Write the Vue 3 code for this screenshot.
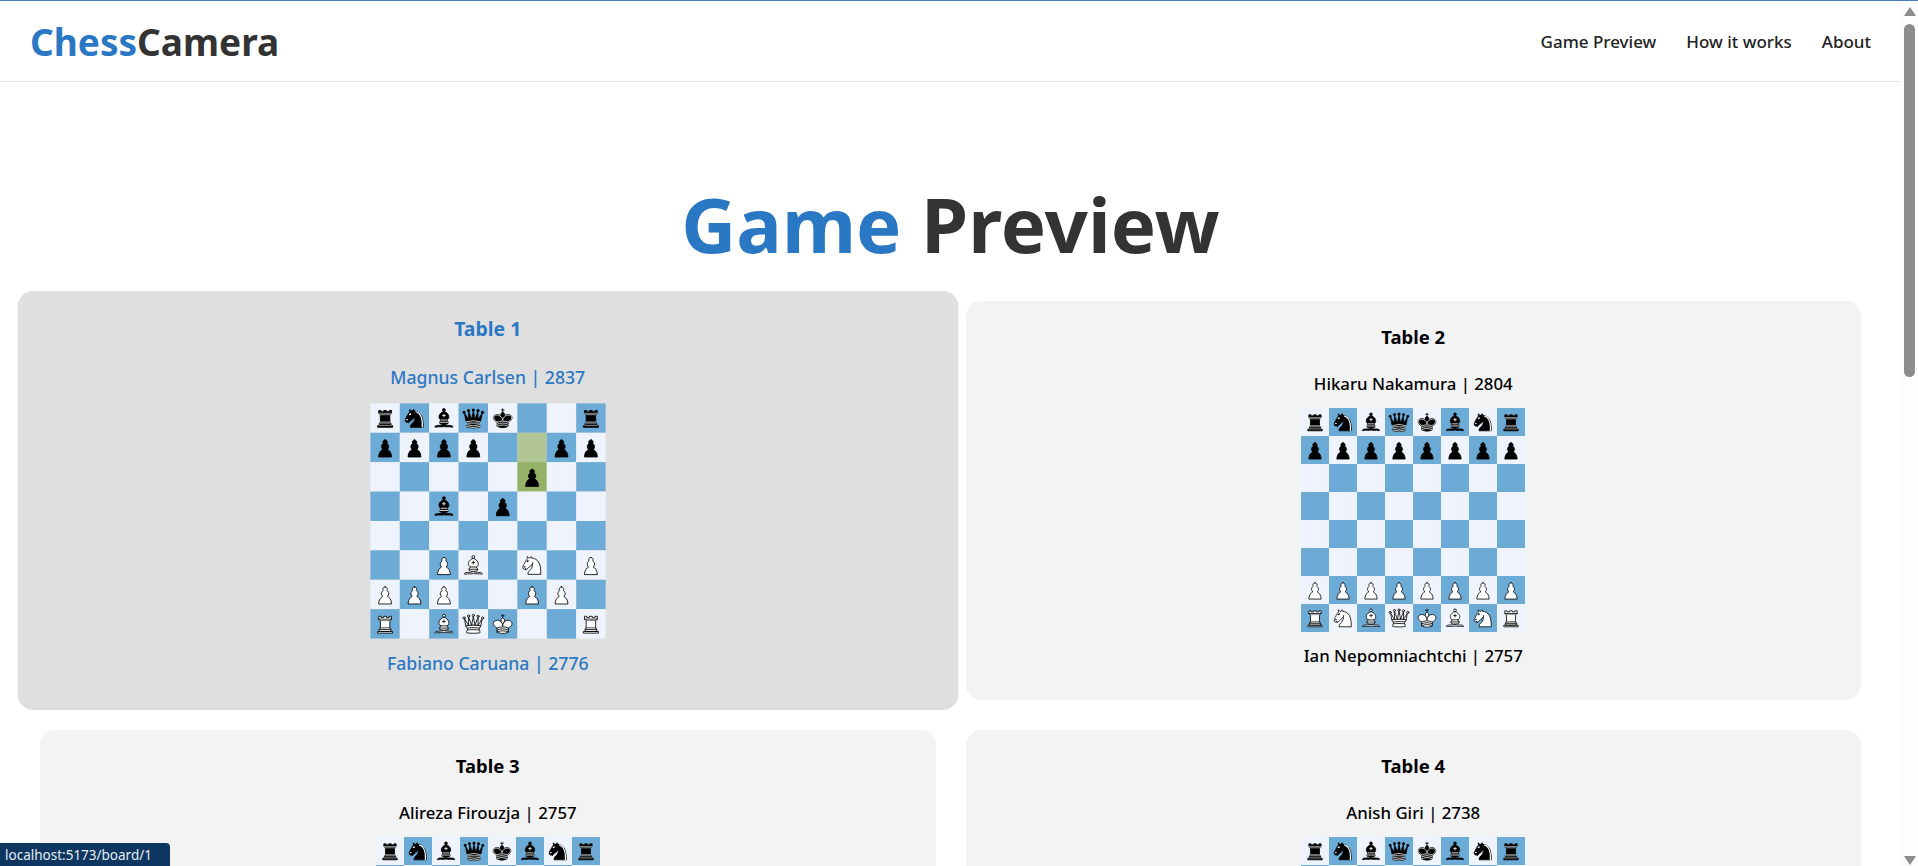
<script setup>
const startFen = 'rnbqkbnr/pppppppp/8/8/8/8/PPPPPPPP/RNBQKBNR'

const tables = [
  { id: 1, white: 'Fabiano Caruana | 2776', black: 'Magnus Carlsen | 2837', fen: 'rnbqk2r/pppp2pp/5p2/2b1p3/8/2PB1N1P/PPP2PP1/R1BQK2R', lastMove: [13, 21], active: true },
  { id: 2, white: 'Ian Nepomniachtchi | 2757', black: 'Hikaru Nakamura | 2804', fen: startFen },
  { id: 3, black: 'Alireza Firouzja | 2757', fen: startFen },
  { id: 4, black: 'Anish Giri | 2738', fen: startFen }
]

const parseFen = (fen) => {
  const squares = []
  for (const ch of fen.replaceAll('/', '')) {
    if (ch >= '1' && ch <= '8') {
      for (let i = 0; i < Number(ch); i++) squares.push(null)
    } else {
      squares.push(ch)
    }
  }
  return squares
}

const pieceId = (ch) => (ch === ch.toUpperCase() ? 'w' : 'b') + ch.toUpperCase()

const squareClass = (index, table) => {
  const row = Math.floor(index / 8)
  const dark = (row + index) % 2 === 1
  const moved = table.lastMove && table.lastMove.includes(index)
  return [dark ? 'dark' : 'light', moved ? 'moved' : '']
}
</script>

<template>
  <div class="page">
    <svg class="defs" width="0" height="0" aria-hidden="true">
      <symbol id="wP" viewBox="0 0 45 45">
        <path d="m22.5 9c-2.21 0-4 1.79-4 4 0 .89.29 1.71.78 2.38C17.33 16.5 16 18.59 16 21c0 2.03.94 3.84 2.41 5.03C15.41 27.09 11 31.58 11 39.5h23c0-7.92-4.41-12.41-7.41-13.47C28.06 24.84 29 23.03 29 21c0-2.41-1.33-4.5-3.28-5.62.49-.67.78-1.49.78-2.38 0-2.21-1.79-4-4-4z" fill="#fff" stroke="#000" stroke-width="1.5" stroke-linecap="round" />
      </symbol>
      <symbol id="bP" viewBox="0 0 45 45">
        <path d="m22.5 9c-2.21 0-4 1.79-4 4 0 .89.29 1.71.78 2.38C17.33 16.5 16 18.59 16 21c0 2.03.94 3.84 2.41 5.03C15.41 27.09 11 31.58 11 39.5h23c0-7.92-4.41-12.41-7.41-13.47C28.06 24.84 29 23.03 29 21c0-2.41-1.33-4.5-3.28-5.62.49-.67.78-1.49.78-2.38 0-2.21-1.79-4-4-4z" fill="#000" stroke="#000" stroke-width="1.5" stroke-linecap="round" />
      </symbol>
      <symbol id="wR" viewBox="0 0 45 45">
        <g fill="#fff" fill-rule="evenodd" stroke="#000" stroke-width="1.5" stroke-linecap="round" stroke-linejoin="round">
          <path d="M9 39h27v-3H9v3zM12 36v-4h21v4H12zM11 14V9h4v2h5V9h5v2h5V9h4v5" stroke-linecap="butt" />
          <path d="M34 14l-3 3H14l-3-3" />
          <path d="M31 17v12.5H14V17" stroke-linecap="butt" stroke-linejoin="miter" />
          <path d="M31 29.5l1.5 2.5h-20l1.5-2.5" />
          <path d="M11 14h23" fill="none" stroke-linejoin="miter" />
        </g>
      </symbol>
      <symbol id="bR" viewBox="0 0 45 45">
        <g fill="#000" fill-rule="evenodd" stroke="#000" stroke-width="1.5" stroke-linecap="round" stroke-linejoin="round">
          <path d="M9 39h27v-3H9v3zM12.5 32l1.5-2.5h17l1.5 2.5h-20zM12 36v-4h21v4H12z" stroke-linecap="butt" />
          <path d="M14 29.5v-13h17v13H14z" stroke-linecap="butt" stroke-linejoin="miter" />
          <path d="M14 16.5L11 14h23l-3 2.5H14zM11 14V9h4v2h5V9h5v2h5V9h4v5H11z" stroke-linecap="butt" />
          <path d="M12 35.5h21M13 31.5h19M14 29.5h17M14 16.5h17M11 14h23" fill="none" stroke="#fff" stroke-width="1" stroke-linejoin="miter" />
        </g>
      </symbol>
      <symbol id="wN" viewBox="0 0 45 45">
        <g fill="none" fill-rule="evenodd" stroke="#000" stroke-width="1.5" stroke-linecap="round" stroke-linejoin="round">
          <path d="M22 10c10.5 1 16.5 8 16 29H15c0-9 10-6.500 8-21" fill="#fff" />
          <path d="M24 18c.38 2.910-5.550 7.370-8 9-3 2-2.820 4.340-5 4-1.042-.940 1.410-3.040 0-3-1 0 .190 1.230-1 2-1 0-4.003 1-4-4 0-2 6-12 6-12s1.890-1.900 2-3.500c-.730-.994-.500-2-.500-3 1-1 3 2.500 3 2.500h2s.780-1.992 2.500-3c1 0 1 3 1 3" fill="#fff" />
          <path d="M9.500 25.500a.5.5 0 1 1-1 0 .5.5 0 1 1 1 0z" fill="#000" />
          <path d="M15 15.500a.5 1.500 0 1 1-1 0 .5 1.500 0 1 1 1 0z" fill="#000" transform="matrix(.866 .5 -.5 .866 9.693 -5.173)" />
        </g>
      </symbol>
      <symbol id="bN" viewBox="0 0 45 45">
        <g fill="none" fill-rule="evenodd" stroke="#000" stroke-width="1.5" stroke-linecap="round" stroke-linejoin="round">
          <path d="M22 10c10.500 1 16.500 8 16 29H15c0-9 10-6.500 8-21" fill="#000" />
          <path d="M24 18c.38 2.910-5.550 7.370-8 9-3 2-2.820 4.340-5 4-1.042-.940 1.410-3.040 0-3-1 0 .190 1.230-1 2-1 0-4.003 1-4-4 0-2 6-12 6-12s1.890-1.900 2-3.500c-.730-.994-.500-2-.500-3 1-1 3 2.500 3 2.500h2s.780-1.992 2.500-3c1 0 1 3 1 3" fill="#000" />
          <path d="M9.500 25.500a.5.5 0 1 1-1 0 .5.5 0 1 1 1 0z" fill="#fff" stroke="#fff" />
          <path d="M15 15.500a.5 1.500 0 1 1-1 0 .5 1.500 0 1 1 1 0z" fill="#fff" stroke="#fff" transform="matrix(.866 .5 -.5 .866 9.693 -5.173)" />
          <path d="M24.550 10.400l-.450 1.450.500.150c3.150 1 5.650 2.490 7.900 6.750S35.750 29.060 35.250 39l-.050.500h2.250l.050-.500c.500-10.060-.880-16.850-3.250-21.340-2.370-4.490-5.790-6.640-9.190-7.160l-.510-.100z" fill="#fff" stroke="none" />
        </g>
      </symbol>
      <symbol id="wB" viewBox="0 0 45 45">
        <g fill="none" fill-rule="evenodd" stroke="#000" stroke-width="1.5" stroke-linecap="round" stroke-linejoin="round">
          <g fill="#fff" stroke-linecap="butt">
            <path d="M9 36c3.390-.970 10.110.430 13.500-2 3.390 2.430 10.110 1.030 13.500 2 0 0 1.650.540 3 2-.680.970-1.650.990-3 .500-3.390-.970-10.110.460-13.500-1-3.390 1.460-10.110.030-13.500 1-1.354.490-2.323.470-3-.500 1.354-1.940 3-2 3-2z" />
            <path d="M15 32c2.500 2.500 12.500 2.500 15 0 .500-1.500 0-2 0-2 0-2.500-2.500-4-2.500-4 5.500-1.500 6-11.500-5-15.500-11 4-10.500 14-5 15.500 0 0-2.500 1.500-2.500 4 0 0-.500.500 0 2z" />
            <path d="M25 8a2.500 2.500 0 1 1-5 0 2.500 2.500 0 1 1 5 0z" />
          </g>
          <path d="M17.500 26h10M15 30h15m-7.500-14.500v5M20 18h5" stroke-linejoin="miter" />
        </g>
      </symbol>
      <symbol id="bB" viewBox="0 0 45 45">
        <g fill="none" fill-rule="evenodd" stroke="#000" stroke-width="1.5" stroke-linecap="round" stroke-linejoin="round">
          <g fill="#000" stroke-linecap="butt">
            <path d="M9 36c3.390-.970 10.110.430 13.500-2 3.390 2.430 10.110 1.030 13.500 2 0 0 1.650.540 3 2-.680.970-1.650.990-3 .500-3.390-.970-10.110.460-13.500-1-3.390 1.460-10.110.030-13.500 1-1.354.490-2.323.470-3-.500 1.354-1.940 3-2 3-2z" />
            <path d="M15 32c2.500 2.500 12.500 2.500 15 0 .500-1.500 0-2 0-2 0-2.500-2.500-4-2.500-4 5.500-1.500 6-11.500-5-15.500-11 4-10.500 14-5 15.500 0 0-2.500 1.500-2.500 4 0 0-.500.500 0 2z" />
            <path d="M25 8a2.500 2.500 0 1 1-5 0 2.500 2.500 0 1 1 5 0z" />
          </g>
          <path d="M17.500 26h10M15 30h15m-7.500-14.500v5M20 18h5" stroke="#fff" stroke-linejoin="miter" />
        </g>
      </symbol>
      <symbol id="wQ" viewBox="0 0 45 45">
        <g fill="#fff" fill-rule="evenodd" stroke="#000" stroke-width="1.5" stroke-linecap="round" stroke-linejoin="round">
          <path d="M8 12a2 2 0 1 1-4 0 2 2 0 1 1 4 0zM24.500 7.500a2 2 0 1 1-4 0 2 2 0 1 1 4 0zM41 12a2 2 0 1 1-4 0 2 2 0 1 1 4 0zM16 8.500a2 2 0 1 1-4 0 2 2 0 1 1 4 0zM33 9a2 2 0 1 1-4 0 2 2 0 1 1 4 0z" />
          <path d="M9 26c8.500-1.500 21-1.500 27 0l2-12-7 11V11l-5.500 13.500-3-15-3 15-5.500-14V25L7 14l2 12z" stroke-linecap="butt" />
          <path d="M9 26c0 2 1.500 2 2.500 4 1 1.500 1 1 .5 3.500-1.500 1-1.500 2.500-1.500 2.500-1.500 1.500.5 2.500.5 2.500 6.500 1 16.500 1 23 0 0 0 1.500-1 0-2.500 0 0 .5-1.500-1-2.500-.5-2.500-.5-2 .5-3.500 1-2 2.500-2 2.500-4-8.500-1.500-18.500-1.500-27 0z" stroke-linecap="butt" />
          <path d="M11.500 30c3.500-1 18.500-1 22 0M12 33.500c6-1 15-1 21 0" fill="none" />
        </g>
      </symbol>
      <symbol id="bQ" viewBox="0 0 45 45">
        <g fill="#000" fill-rule="evenodd" stroke="#000" stroke-width="1.5" stroke-linecap="round" stroke-linejoin="round">
          <g stroke="none">
            <circle cx="6" cy="12" r="2.750" />
            <circle cx="14" cy="9" r="2.750" />
            <circle cx="22.500" cy="8" r="2.750" />
            <circle cx="31" cy="9" r="2.750" />
            <circle cx="39" cy="12" r="2.750" />
          </g>
          <path d="M9 26c8.500-1.500 21-1.500 27 0l2.500-12.500L31 25l-.3-14.100-5.200 13.600-3-14.500-3 14.500-5.200-13.600L14 25 6.500 13.500 9 26z" stroke-linecap="butt" />
          <path d="M9 26c0 2 1.500 2 2.500 4 1 1.500 1 1 .5 3.500-1.500 1-1.500 2.500-1.500 2.500-1.500 1.500.5 2.500.5 2.500 6.500 1 16.500 1 23 0 0 0 1.500-1 0-2.500 0 0 .5-1.500-1-2.500-.5-2.500-.5-2 .5-3.500 1-2 2.500-2 2.500-4-8.500-1.500-18.500-1.500-27 0z" stroke-linecap="butt" />
          <path d="M11 38.500a35 35 1 0 0 23 0" fill="none" stroke-linecap="butt" />
          <path d="M11 29a35 35 1 0 1 23 0M12.500 31.500h20M11.500 34.500a35 35 1 0 0 22 0M10.500 37.500a35 35 1 0 0 24 0" fill="none" stroke="#ececec" />
        </g>
      </symbol>
      <symbol id="wK" viewBox="0 0 45 45">
        <g fill="none" fill-rule="evenodd" stroke="#000" stroke-width="1.5" stroke-linecap="round" stroke-linejoin="round">
          <path d="M22.500 11.630V6M20 8h5" stroke-linejoin="miter" />
          <path d="M22.500 25s4.500-7.500 3-10.500c0 0-1-2.500-3-2.500s-3 2.500-3 2.500c-1.500 3 3 10.500 3 10.500" fill="#fff" stroke-linecap="butt" stroke-linejoin="miter" />
          <path d="M12.500 37c5.500 3.500 14.500 3.500 20 0v-7s9-4.500 6-10.500c-4-6.500-13.500-3.500-16 4V27v-3.500c-2.500-7.500-12-10.500-16-4-3 6 6 10.500 6 10.500v7" fill="#fff" />
          <path d="M12.500 30c5.500-3 14.500-3 20 0M12.500 33.500c5.500-3 14.500-3 20 0M12.500 37c5.500-3 14.500-3 20 0" />
        </g>
      </symbol>
      <symbol id="bK" viewBox="0 0 45 45">
        <g fill="none" fill-rule="evenodd" stroke="#000" stroke-width="1.5" stroke-linecap="round" stroke-linejoin="round">
          <path d="M22.500 11.630V6" stroke-linejoin="miter" />
          <path d="M22.500 25s4.500-7.500 3-10.500c0 0-1-2.500-3-2.500s-3 2.500-3 2.500c-1.500 3 3 10.500 3 10.500" fill="#000" stroke-linecap="butt" stroke-linejoin="miter" />
          <path d="M12.500 37c5.500 3.500 14.500 3.500 20 0v-7s9-4.500 6-10.500c-4-6.500-13.500-3.500-16 4V27v-3.500c-2.500-7.500-12-10.500-16-4-3 6 6 10.500 6 10.500v7" fill="#000" />
          <path d="M20 8h5" stroke-linejoin="miter" />
          <path d="M32 29.500s8.500-4 6.030-9.650C34.150 14 25 18 22.500 24.500v2.100-2.100C20 18 10.850 14 6.970 19.850 4.500 25.500 13 29.500 13 29.500" stroke="#ececec" />
          <path d="M12.500 30c5.500-3 14.500-3 20 0m-20 3.500c5.500-3 14.500-3 20 0m-20 3.500c5.500-3 14.500-3 20 0" stroke="#ececec" />
        </g>
      </symbol>
    </svg>

    <div class="content">
      <header class="navbar">
        <a class="logo" href="#"><span class="accent">Chess</span>Camera</a>
        <nav class="nav-links">
          <a href="#">Game Preview</a>
          <a href="#">How it works</a>
          <a href="#">About</a>
        </nav>
      </header>

      <main class="preview">
        <h1><span class="accent">Game</span> Preview</h1>

        <div class="grid">
          <div v-for="table in tables" :key="table.id" class="card" :class="{ active: table.active }">
            <h3>Table {{ table.id }}</h3>
            <p class="player">{{ table.black }}</p>
            <div class="board">
              <div
                v-for="(piece, index) in parseFen(table.fen)"
                :key="index"
                class="square"
                :class="squareClass(index, table)"
              >
                <svg v-if="piece" class="piece" viewBox="0 0 45 45">
                  <use :href="'#' + pieceId(piece)" />
                </svg>
              </div>
            </div>
            <p v-if="table.white" class="player">{{ table.white }}</p>
          </div>
        </div>
      </main>
    </div>

    <div class="scrollbar">
      <span class="arrow up"></span>
      <span class="thumb"></span>
      <span class="arrow down"></span>
    </div>

    <div class="status">localhost:5173/board/1</div>
  </div>
</template>

<style scoped>
.page {
  position: relative;
  display: flex;
  height: 866px;
  overflow: hidden;
  background: #fff;
  color: #333;
  font-family: "Noto Sans", "Open Sans", sans-serif;
}

.page::before {
  content: '';
  position: absolute;
  top: 0;
  left: 0;
  right: 0;
  height: 1px;
  background: #4a7db8;
  z-index: 2;
}

.defs {
  position: absolute;
}

.content {
  flex: 1;
  min-width: 0;
}

.navbar {
  display: flex;
  align-items: center;
  justify-content: space-between;
  height: 82px;
  padding: 1px 30px 0;
  box-sizing: border-box;
  border-bottom: 1px solid #e5e5e5;
}

.logo {
  font-size: 37px;
  font-weight: 700;
  color: #333;
  text-decoration: none;
}

.accent {
  color: #2a78c4;
}

.nav-links {
  display: flex;
  gap: 30px;
}

.nav-links a {
  color: #222;
  font-size: 17px;
  font-weight: 500;
  text-decoration: none;
}

.preview {
  padding: 0 40px;
}

h1 {
  margin: 0;
  padding: 102px 0 37px;
  font-size: 76px;
  line-height: 80px;
  font-weight: 700;
  text-align: center;
}

.grid {
  display: grid;
  grid-template-columns: 1fr 1fr;
  gap: 30px;
}

.card {
  display: flex;
  flex-direction: column;
  align-items: center;
  height: 399px;
  box-sizing: border-box;
  padding-top: 24px;
  background: #f3f3f4;
  border-radius: 15px;
  color: #000;
  cursor: pointer;
}

.card.active {
  transform: scale(1.05);
  background: #dfdfdf;
  color: #2a78c4;
}

h3 {
  margin: 0 0 23px;
  font-size: 18.5px;
  line-height: 24px;
  font-weight: 700;
}

.player {
  margin: 0;
  font-size: 16.8px;
  line-height: 24px;
  font-weight: 500;
}

.board {
  display: grid;
  grid-template-columns: repeat(8, 28px);
  grid-auto-rows: 28px;
  margin: 12px 0;
}

.square {
  display: flex;
  align-items: center;
  justify-content: center;
}

.light {
  background: #eff3fe;
}

.dark {
  background: #6babd6;
}

.light.moved {
  background: #b2c596;
}

.dark.moved {
  background: #94b267;
}

.piece {
  width: 24px;
  height: 24px;
}

.scrollbar {
  display: flex;
  flex-direction: column;
  align-items: center;
  flex: none;
  width: 17px;
  padding: 7px 0 1px;
  box-sizing: border-box;
  background: #fdfdfd;
}

.arrow {
  width: 0;
  height: 0;
  border-left: 6px solid transparent;
  border-right: 6px solid transparent;
}

.arrow.up {
  border-bottom: 9px solid #8c8c8c;
}

.arrow.down {
  margin-top: auto;
  border-top: 9px solid #8c8c8c;
}

.thumb {
  width: 11px;
  height: 353px;
  margin-top: 8px;
  border-radius: 6px;
  background: #8c8c8c;
}

.status {
  position: absolute;
  left: 0;
  bottom: 0;
  width: 170px;
  height: 23px;
  padding-left: 5px;
  box-sizing: border-box;
  border-top-right-radius: 4px;
  background: #0d3660;
  color: #e6ecf3;
  font-size: 13.5px;
  line-height: 24px;
}
</style>
